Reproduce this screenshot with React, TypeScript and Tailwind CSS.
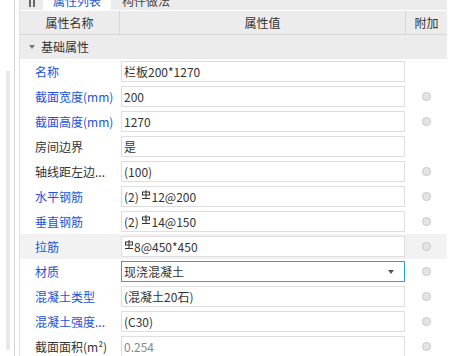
import React from "react";

type Row = {
  label: string;
  value: React.ReactNode;
  blue?: boolean;
  attach?: boolean;
  select?: boolean;
  hover?: boolean;
  muted?: boolean;
};

function Rebar() {
  return (
    <svg
      width="8"
      height="9"
      viewBox="0 0 8 9"
      className="mx-[1px] inline-block align-[3px]"
      fill="none"
      stroke="#333"
      strokeWidth="1"
    >
      <rect x="0.5" y="2" width="7" height="3" />
      <line x1="4" y1="0" x2="4" y2="8" />
      <line x1="0" y1="8.5" x2="8" y2="8.5" />
    </svg>
  );
}

const rows: Row[] = [
  { label: "名称", value: "栏板200*1270", blue: true },
  { label: "截面宽度(mm)", value: "200", blue: true, attach: true },
  { label: "截面高度(mm)", value: "1270", blue: true, attach: true },
  { label: "房间边界", value: "是" },
  { label: "轴线距左边...", value: "(100)", attach: true },
  {
    label: "水平钢筋",
    value: (
      <>
        (2) <Rebar />
        12@200
      </>
    ),
    blue: true,
    attach: true,
  },
  {
    label: "垂直钢筋",
    value: (
      <>
        (2) <Rebar />
        14@150
      </>
    ),
    blue: true,
    attach: true,
  },
  {
    label: "拉筋",
    value: (
      <>
        <Rebar />
        8@450*450
      </>
    ),
    blue: true,
    attach: true,
    hover: true,
  },
  { label: "材质", value: "现浇混凝土", blue: true, attach: true, select: true },
  { label: "混凝土类型", value: "(混凝土20石)", blue: true, attach: true },
  { label: "混凝土强度...", value: "(C30)", blue: true, attach: true },
  { label: "截面面积(m²)", value: "0.254", attach: true, muted: true },
];

export default function App() {
  return (
    <div
      className="flex h-[356px] w-[452px] overflow-hidden bg-white text-[12px] text-[#333]"
      style={{ fontFamily: '"Noto Sans CJK SC", "Noto Sans", sans-serif' }}
    >
      {/* left strip with scrollbar */}
      <div className="flex w-[20px] shrink-0">
        <div className="w-[6px]" />
        <div className="mt-[71px] h-[279px] w-[4px] bg-[#e8e8e8]" />
        <div className="w-[4px]" />
        <div className="w-[1px] bg-[#d4d4d4]" />
        <div className="w-[4px]" />
        <div className="w-[1px] bg-[#e0e0e0]" />
      </div>

      <div className="flex w-[427px] shrink-0 flex-col">
        {/* tabs */}
        <div className="flex h-[10px] shrink-0 overflow-hidden bg-[#ececec]">
          <div className="flex w-[23px] items-start justify-center">
            <div className="flex gap-[2px]">
              <div className="h-[7px] w-[2px] bg-[#666]" />
              <div className="h-[7px] w-[2px] bg-[#666]" />
            </div>
          </div>
          <div className="flex w-[68px] justify-center bg-white">
            <span className="-mt-[8px] leading-[18px] text-[#2352d8]">属性列表</span>
          </div>
          <div className="flex w-[70px] justify-center">
            <span className="-mt-[8px] leading-[18px] text-[#444]">构件做法</span>
          </div>
        </div>
        <div className="h-[1px] shrink-0 bg-white" />

        {/* header */}
        <div className="flex h-[24px] shrink-0 border-b border-[#d6d6d6] bg-[#ececec]">
          <div className="flex w-[100px] items-center justify-center border-r border-[#d6d6d6]">
            属性名称
          </div>
          <div className="flex w-[286px] items-center justify-center border-r border-[#d6d6d6]">
            属性值
          </div>
          <div className="flex flex-1 items-center justify-center">附加</div>
        </div>

        {/* group */}
        <div className="flex h-[24px] shrink-0 items-center bg-[#ececec]">
          <svg width="6" height="4" viewBox="0 0 6 4" className="ml-[9px] mr-[6px]">
            <path d="M0 0h6L3 4z" fill="#777" />
          </svg>
          <span>基础属性</span>
        </div>

        {rows.map((r) => (
          <div
            key={r.label}
            className={`flex h-[25px] shrink-0 items-center ${r.hover ? "bg-[#f2f2f2]" : ""}`}
          >
            <div
              className={`w-[100px] pl-[15px] whitespace-nowrap ${
                r.blue ? "text-[#2352d8]" : "text-[#333]"
              }`}
            >
              {r.label}
            </div>
            <div className="w-[286px] px-[1px]">
              <div
                className={`flex h-[21px] items-center border bg-white pl-[2px] pr-[10px] ${
                  r.select ? "border-[#2aa3d8]" : "border-[#dedede]"
                } ${r.muted ? "text-[#8a8a8a]" : "text-[#333]"}`}
              >
                <span className="flex-1 whitespace-nowrap">{r.value}</span>
                {r.select && (
                  <svg width="6" height="4" viewBox="0 0 6 4">
                    <path d="M0 0h6L3 4z" fill="#555" />
                  </svg>
                )}
              </div>
            </div>
            <div className="flex flex-1 justify-center">
              {r.attach && (
                <div className="h-[9px] w-[9px] rounded-full border border-[#c6c6c6] bg-[#e4e4e4]" />
              )}
            </div>
          </div>
        ))}
      </div>
    </div>
  );
}
